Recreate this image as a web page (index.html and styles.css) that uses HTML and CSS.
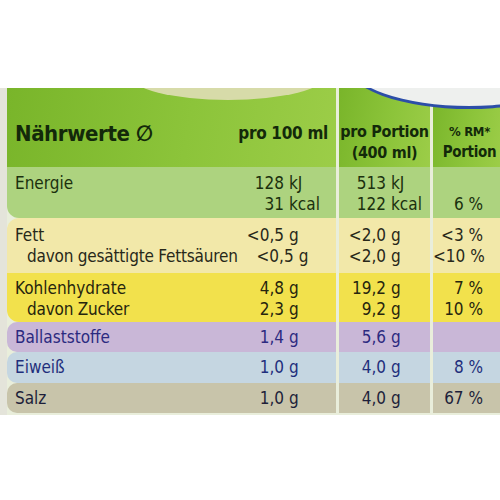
FILE: index.html
```html
<!DOCTYPE html>
<html lang="de">
    <head>
        <title>Nährwerte</title>
        <meta charset="utf-8">
        <meta name="viewport" content="width=device-width, initial-scale=1">
        <link rel="stylesheet" href="styles.css">
    </head>
    <body>
        <div class="label">
            <div class="row head">
                <div class="cell a">
                    <span class="title">Nährwerte &#8709;</span>
                    <span class="col-title">pro 100 ml</span>
                </div>
                <div class="cell b">
                    <div>pro Portion</div>
                    <div>(400 ml)</div>
                </div>
                <div class="cell c">
                    <div class="small">% RM*</div>
                    <div>Portion</div>
                </div>
            </div>
            <div class="blob"></div>
            <div class="logo"></div>

            <div class="row energie">
                <div class="cell a">
                    <div class="line"><span>Energie</span><span class="num">128</span><span class="unit">kJ</span></div>
                    <div class="line"><span></span><span class="num">31</span><span class="unit">kcal</span></div>
                </div>
                <div class="cell b">
                    <div class="line"><span class="num">513</span><span class="unit">kJ</span></div>
                    <div class="line"><span class="num">122</span><span class="unit">kcal</span></div>
                </div>
                <div class="cell c">&nbsp;<br/>6 %</div>
            </div>

            <div class="row fett">
                <div class="cell a">
                    <div class="line"><span>Fett</span><span class="num">&lt;0,5</span><span class="unit">g</span></div>
                    <div class="line"><span class="sub">davon gesättigte Fettsäuren</span><span class="num">&lt;0,5</span><span class="unit">g</span></div>
                </div>
                <div class="cell b">
                    <div class="line"><span class="num">&lt;2,0</span><span class="unit">g</span></div>
                    <div class="line"><span class="num">&lt;2,0</span><span class="unit">g</span></div>
                </div>
                <div class="cell c">&lt;3 %<br/>&lt;10 %</div>
            </div>

            <div class="row kohlen">
                <div class="cell a">
                    <div class="line"><span>Kohlenhydrate</span><span class="num">4,8</span><span class="unit">g</span></div>
                    <div class="line"><span class="sub">davon Zucker</span><span class="num">2,3</span><span class="unit">g</span></div>
                </div>
                <div class="cell b">
                    <div class="line"><span class="num">19,2</span><span class="unit">g</span></div>
                    <div class="line"><span class="num">9,2</span><span class="unit">g</span></div>
                </div>
                <div class="cell c">7 %<br/>10 %</div>
            </div>

            <div class="row ballast">
                <div class="cell a">
                    <div class="line"><span>Ballaststoffe</span><span class="num">1,4</span><span class="unit">g</span></div>
                </div>
                <div class="cell b">
                    <div class="line"><span class="num">5,6</span><span class="unit">g</span></div>
                </div>
                <div class="cell c">&nbsp;</div>
            </div>

            <div class="row eiweiss">
                <div class="cell a">
                    <div class="line"><span>Eiweiß</span><span class="num">1,0</span><span class="unit">g</span></div>
                </div>
                <div class="cell b">
                    <div class="line"><span class="num">4,0</span><span class="unit">g</span></div>
                </div>
                <div class="cell c">8 %</div>
            </div>

            <div class="row salz">
                <div class="cell a">
                    <div class="line"><span>Salz</span><span class="num">1,0</span><span class="unit">g</span></div>
                </div>
                <div class="cell b">
                    <div class="line"><span class="num">4,0</span><span class="unit">g</span></div>
                </div>
                <div class="cell c">67 %</div>
            </div>
        </div>
    </body>
</html>
```

FILE: styles.css
```css
body {
  margin: 0;
  background: #fff;
  font-family: "DejaVu Sans Condensed", "DejaVu Sans", sans-serif;
  font-stretch: condensed;
  font-size: 17px;
}

.label {
  position: relative;
  overflow: hidden;
  margin-top: 88px;
  padding-left: 7px;
  padding-bottom: 2px;
  background: linear-gradient(to right, #e4e4da 0, #e4e4da 7px, #e9eedb 7px);
}

.row {
  display: grid;
  grid-template-columns: 329px 91px 67px;
  column-gap: 3px;
  line-height: 21px;
}

.cell.a {
  border-radius: 10px 0 0 10px;
}

.cell.c {
  text-align: right;
  padding-right: 17px;
  white-space: nowrap;
}

.line {
  display: grid;
}

.cell.a .line {
  grid-template-columns: 1fr 56px 52px;
  padding-left: 8px;
}

.cell.b .line {
  grid-template-columns: 47px 44px;
}

.num {
  text-align: right;
  white-space: nowrap;
}

.unit {
  padding-left: 5px;
}

.sub {
  padding-left: 12px;
  white-space: nowrap;
  letter-spacing: -0.2px;
}

/* header */
.head {
  height: 79px;
  font-weight: bold;
  color: #13290a;
}

.head .cell {
  background: linear-gradient(100deg, #79b52a 0%, #8cc43a 55%, #9ccd48 100%);
  display: flex;
  flex-direction: column;
  justify-content: flex-end;
  box-sizing: border-box;
  white-space: nowrap;
}

.head .cell.a {
  border-radius: 0;
  flex-direction: row;
  justify-content: space-between;
  align-items: flex-end;
  padding: 0 8px 23px 8px;
}

.head .cell.b {
  text-align: center;
  padding-bottom: 4px;
  font-size: 16px;
  letter-spacing: -0.3px;
}

.head .cell.c {
  text-align: center;
  padding: 0 0 4px 6px;
  font-size: 15px;
  letter-spacing: -0.3px;
}

.head .small {
  font-size: 13px;
}

.title {
  font-size: 22px;
  line-height: 24px;
  margin-bottom: -2px;
  letter-spacing: -0.4px;
}

.col-title {
  letter-spacing: -0.3px;
}

.blob {
  position: absolute;
  left: 128px;
  top: -40px;
  width: 200px;
  height: 52px;
  border-radius: 50%;
  background: #d7dba9;
}

.logo {
  position: absolute;
  left: 346px;
  top: -70px;
  width: 240px;
  height: 85px;
  border-radius: 50%;
  background: #eef0ee;
  border: 3px solid #2c4ea8;
}

/* bands */
.energie { color: #1b300e; }
.energie .cell { background: #add37f; padding-top: 6px; padding-bottom: 3px; }
.energie .cell.a { border-radius: 0 0 0 12px; }

.fett { color: #28281a; }
.fett .cell { background: #f2e8a9; padding-top: 7px; padding-bottom: 6px; }
.fett .cell.a { border-radius: 12px 0 0 0; }

.kohlen { color: #26250e; }
.kohlen .cell { background: #f2e14c; padding-top: 5px; padding-bottom: 2px; }
.kohlen .cell.a { border-radius: 0 0 0 12px; }

.ballast { color: #2c2a80; }
.ballast .cell { background: #c9b7d7; padding-top: 5px; padding-bottom: 4px; }

.eiweiss { color: #1f2f7c; }
.eiweiss .cell { background: #c5d6e1; padding-top: 5px; padding-bottom: 5px; }

.salz { color: #1d1f3a; }
.salz .cell { background: #c8c4aa; padding-top: 5px; padding-bottom: 4px; }
```
